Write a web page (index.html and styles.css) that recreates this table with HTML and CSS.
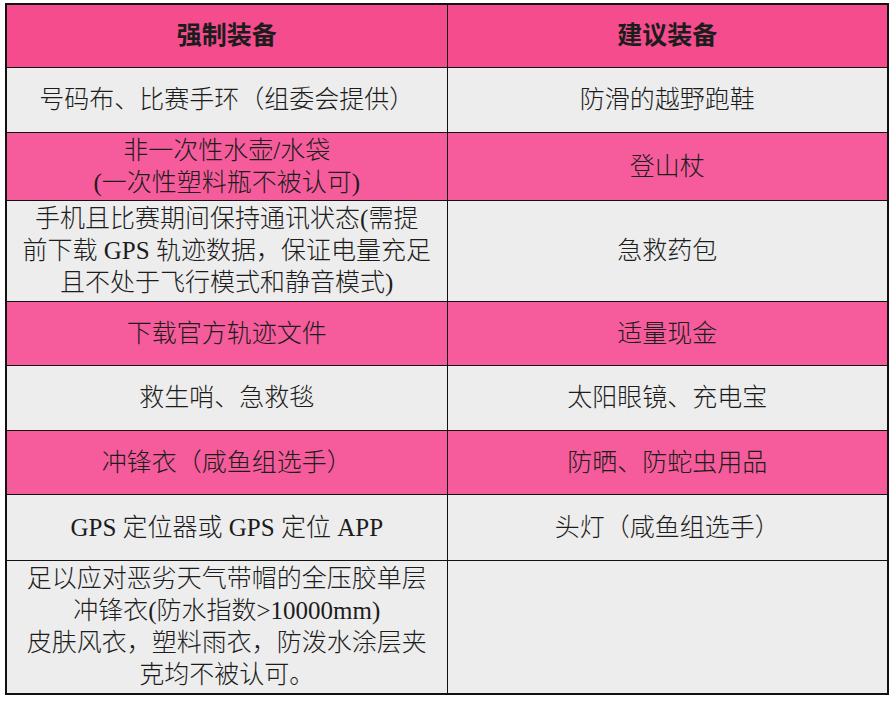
FILE: index.html
```html
<!DOCTYPE html>
<html lang="zh-CN">
<head>
<meta charset="utf-8">
<title>装备清单</title>
<link rel="stylesheet" href="styles.css">
</head>
<body>
<div class="gear">
  <div class="cell head">强制装备</div>
  <div class="cell head">建议装备</div>

  <div class="cell gray">号码布、比赛手环（组委会提供）</div>
  <div class="cell gray">防滑的越野跑鞋</div>

  <div class="cell pink">非一次性水壶/水袋<br>(一次性塑料瓶不被认可)</div>
  <div class="cell pink">登山杖</div>

  <div class="cell gray">手机且比赛期间保持通讯状态(需提<br>前下载 GPS 轨迹数据，保证电量充足<br>且不处于飞行模式和静音模式)</div>
  <div class="cell gray">急救药包</div>

  <div class="cell pink">下载官方轨迹文件</div>
  <div class="cell pink">适量现金</div>

  <div class="cell gray">救生哨、急救毯</div>
  <div class="cell gray">太阳眼镜、充电宝</div>

  <div class="cell pink">冲锋衣（咸鱼组选手）</div>
  <div class="cell pink">防晒、防蛇虫用品</div>

  <div class="cell gray">GPS 定位器或 GPS 定位 APP</div>
  <div class="cell gray">头灯（咸鱼组选手）</div>

  <div class="cell gray">足以应对恶劣天气带帽的全压胶单层<br>冲锋衣(防水指数&gt;10000mm)<br>皮肤风衣，塑料雨衣，防泼水涂层夹<br>克均不被认可。</div>
  <div class="cell gray"></div>
</div>
</body>
</html>
```

FILE: styles.css
```css
html, body {
  margin: 0;
  padding: 0;
  background: #ffffff;
}

body {
  padding: 3px 6px 0 5px;
  font-family: "Liberation Serif", "Noto Sans CJK SC", serif;
  color: #1c1c1c;
}

.gear {
  display: grid;
  grid-template-columns: 1fr 1fr;
  grid-template-rows: 62px 64px 67px 100px 63px 64px 63px 65px 132px;
  gap: 1px;
  background: #111111;
  border: 2px solid #111111;
  width: 880px;
}

.cell {
  display: flex;
  align-items: center;
  justify-content: center;
  text-align: center;
  font-size: 25px;
  font-weight: 300;
  line-height: 32px;
  padding: 0 4px;
  white-space: nowrap;
}

.head {
  background: #f54c8e;
  font-weight: bold;
}

.pink {
  background: #f65c9b;
}

.gray {
  background: #ededed;
}
```
